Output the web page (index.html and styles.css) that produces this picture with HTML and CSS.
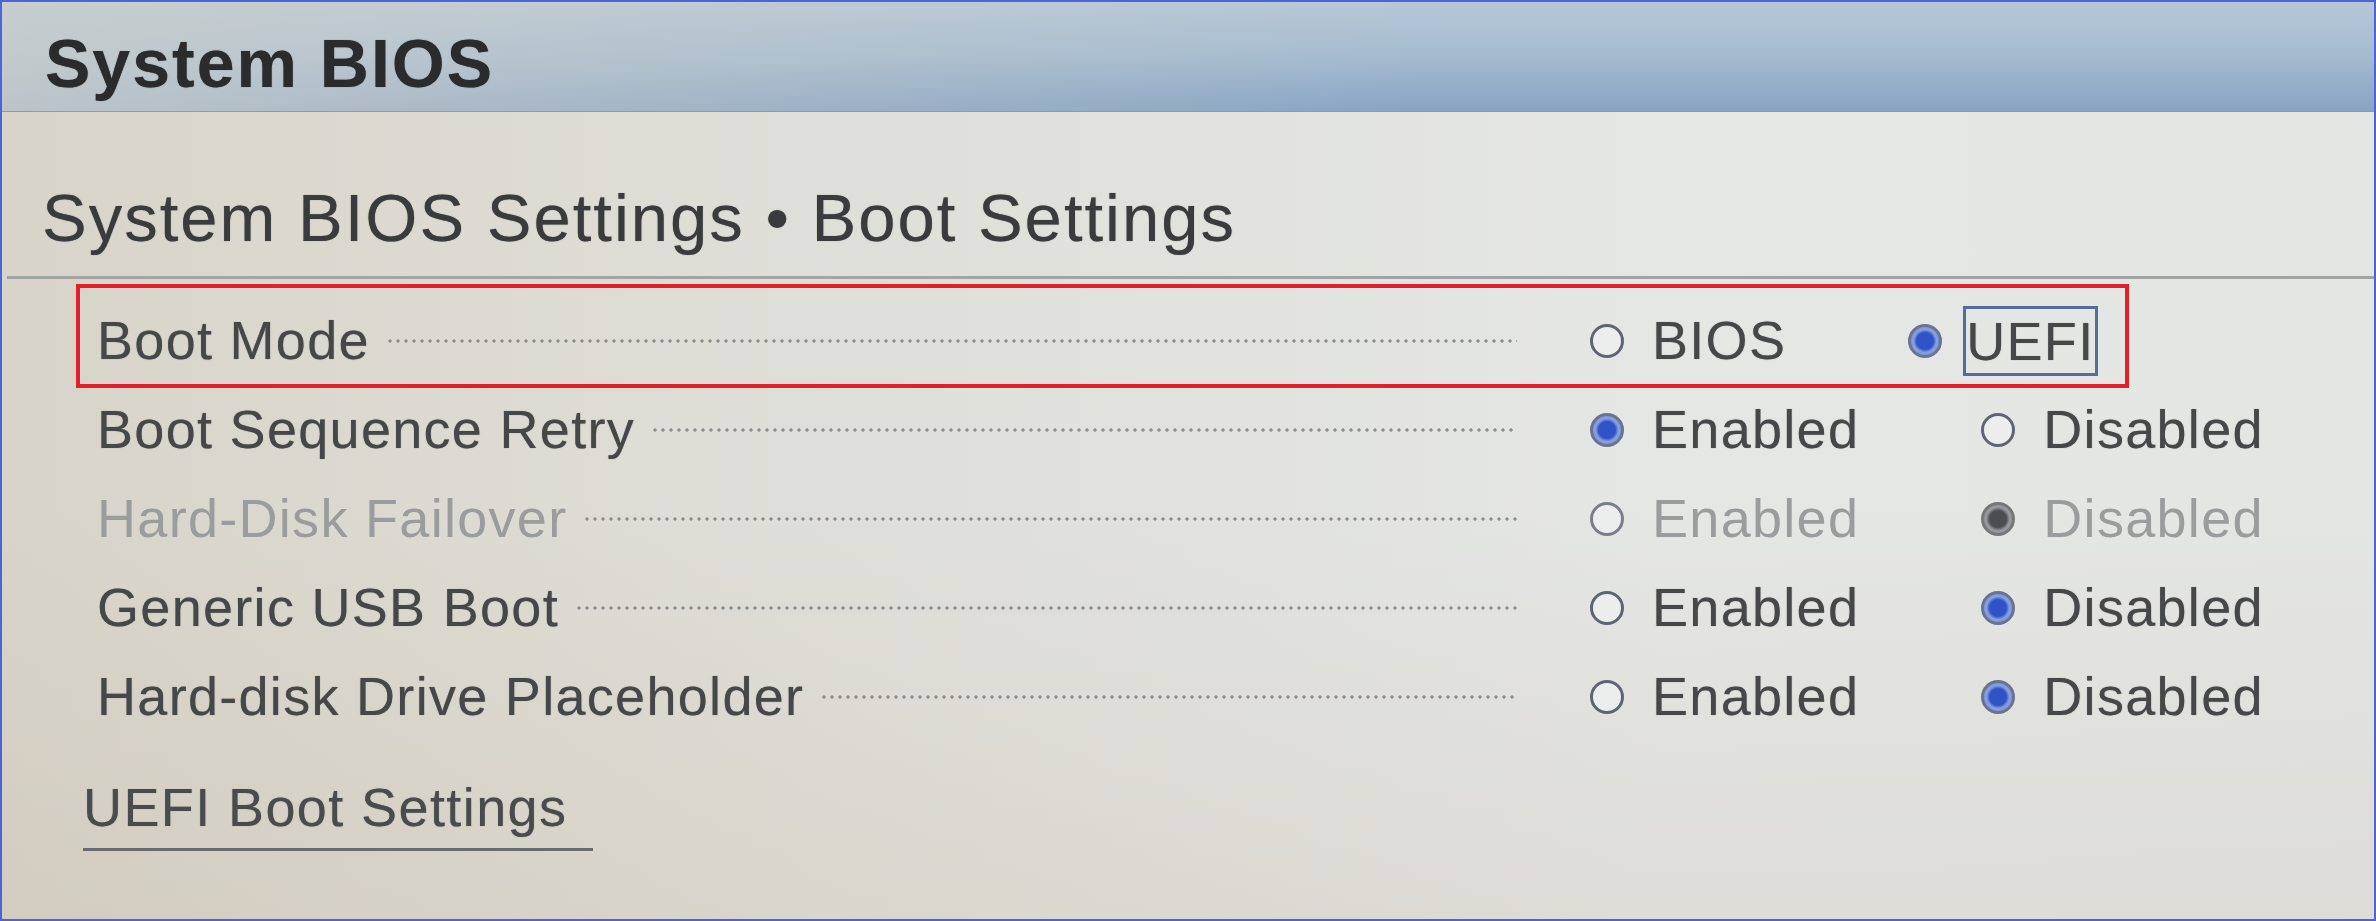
FILE: index.html
```html
<!DOCTYPE html>
<html lang="en">
<head>
<meta charset="utf-8">
<title>System BIOS</title>
<link rel="stylesheet" href="styles.css">
</head>
<body>
<div class="frame">
  <header class="topbar">
    <h1 class="title">System BIOS</h1>
  </header>
  <h2 class="subtitle">System BIOS Settings • Boot Settings</h2>
  <div class="separator"></div>
  <div class="rows">
    <div class="row row-first highlighted">
      <div class="name-col"><span class="label">Boot Mode</span><span class="leader"></span></div>
      <div class="options">
        <span class="option"><span class="radio"></span><span class="opt-text">BIOS</span></span>
        <span class="option"><span class="radio on"></span><span class="opt-text focus">UEFI</span></span>
      </div>
    </div>
    <div class="row">
      <div class="name-col"><span class="label">Boot Sequence Retry</span><span class="leader"></span></div>
      <div class="options">
        <span class="option"><span class="radio on"></span><span class="opt-text">Enabled</span></span>
        <span class="option"><span class="radio"></span><span class="opt-text">Disabled</span></span>
      </div>
    </div>
    <div class="row disabled">
      <div class="name-col"><span class="label">Hard-Disk Failover</span><span class="leader"></span></div>
      <div class="options">
        <span class="option"><span class="radio"></span><span class="opt-text">Enabled</span></span>
        <span class="option"><span class="radio on"></span><span class="opt-text">Disabled</span></span>
      </div>
    </div>
    <div class="row">
      <div class="name-col"><span class="label">Generic USB Boot</span><span class="leader"></span></div>
      <div class="options">
        <span class="option"><span class="radio"></span><span class="opt-text">Enabled</span></span>
        <span class="option"><span class="radio on"></span><span class="opt-text">Disabled</span></span>
      </div>
    </div>
    <div class="row">
      <div class="name-col"><span class="label">Hard-disk Drive Placeholder</span><span class="leader"></span></div>
      <div class="options">
        <span class="option"><span class="radio"></span><span class="opt-text">Enabled</span></span>
        <span class="option"><span class="radio on"></span><span class="opt-text">Disabled</span></span>
      </div>
    </div>
  </div>
  <div class="link-wrap"><span class="link">UEFI Boot Settings</span></div>
</div>
</body>
</html>
```
FILE: styles.css
```css
html, body {
  margin: 0;
  padding: 0;
}
body {
  width: 2376px;
  height: 921px;
  overflow: hidden;
  font-family: "Liberation Sans", Arial, sans-serif;
}
.frame {
  box-sizing: border-box;
  width: 2376px;
  height: 921px;
  border: 2px solid #4d63d8;
  background:
    linear-gradient(180deg, rgba(255,255,255,0) 55%, rgba(190,172,150,0.18) 100%),
    linear-gradient(90deg, #d8d4ca 0%, #dfdfd9 35%, #e5e7e5 70%, #e4e6e4 100%);
}
.topbar {
  height: 110px;
  box-sizing: border-box;
  padding: 27px 0 0 43px;
  background:
    linear-gradient(90deg, rgba(205,207,203,0.75) 0%, rgba(205,207,203,0.35) 30%, rgba(205,207,203,0) 60%),
    linear-gradient(180deg, #b6c8d7 0%, #a4bbd0 50%, #88a4c4 100%);
  border-bottom: 1px solid #8a9cb0;
}
.title {
  margin: 0;
  font-size: 68px;
  line-height: 68px;
  font-weight: bold;
  letter-spacing: 2px;
  color: #2a2b2d;
  text-shadow: 0 0 1px rgba(40,40,40,0.6);
}
.subtitle {
  margin: 72px 0 0 40px;
  font-size: 67px;
  line-height: 67px;
  font-weight: normal;
  letter-spacing: 2px;
  color: #3a3b3c;
  text-shadow: 0 0 1px rgba(50,50,50,0.6);
}
.separator {
  margin: 25px 0 0 5px;
  height: 3px;
  background: #a3a5a4;
}
.rows {
  margin: 8px 0 0 77px;
  width: 2047px;
}
.row {
  display: flex;
  align-items: center;
  height: 89px;
  padding-left: 18px;
  font-size: 54px;
  line-height: 89px;
  letter-spacing: 1.3px;
  color: #464748;
  text-shadow: 0 0 1px rgba(60,60,60,0.5);
}
.row-first {
  height: 89px;
  padding-top: 9px;
}
.highlighted {
  outline: 4px solid #e41f27;
  outline-offset: -1px;
}
.name-col {
  display: flex;
  align-items: center;
  width: 1420px;
  flex: none;
}
.label {
  white-space: nowrap;
  flex: none;
}
.leader {
  flex: 1;
  height: 4px;
  margin-left: 16px;
  background-image: radial-gradient(circle, #8c8d8e 1.3px, rgba(0,0,0,0) 2px);
  background-size: 8px 4px;
  background-repeat: repeat-x;
}
.options {
  display: flex;
  align-items: center;
  gap: 122px;
  margin-left: 73px;
}
.option {
  display: flex;
  align-items: center;
}
.radio {
  box-sizing: border-box;
  width: 34px;
  height: 34px;
  border-radius: 50%;
  border: 3px solid #5f6473;
  background: #eceeee;
  flex: none;
}
.radio.on {
  border-color: #6a7390;
  background: radial-gradient(circle, #2f52c6 0 42%, #88a0e2 58%, #6e80bd 100%);
}
.opt-text {
  margin-left: 28px;
  white-space: nowrap;
}
.opt-text.focus {
  margin-left: 21px;
  box-sizing: border-box;
  height: 70px;
  line-height: 64px;
  border: 3px solid #566c9a;
  padding: 0 1px 0 0;
}
.disabled {
  color: #9b9c9d;
  text-shadow: none;
}
.disabled .radio {
  border-color: #7a7e88;
}
.disabled .radio.on {
  border-color: #777;
  background: radial-gradient(circle, #4c4d50 0 42%, #9a9b9e 60%, #7a7b80 100%);
}
.link-wrap {
  margin: 39px 0 0 81px;
}
.link {
  display: inline-block;
  font-size: 54px;
  line-height: 54px;
  letter-spacing: 1.4px;
  color: #4a4b4d;
  padding: 0 26px 14px 0;
  border-bottom: 3px solid #6a6b6e;
  text-shadow: 0 0 1px rgba(60,60,60,0.5);
}
```
